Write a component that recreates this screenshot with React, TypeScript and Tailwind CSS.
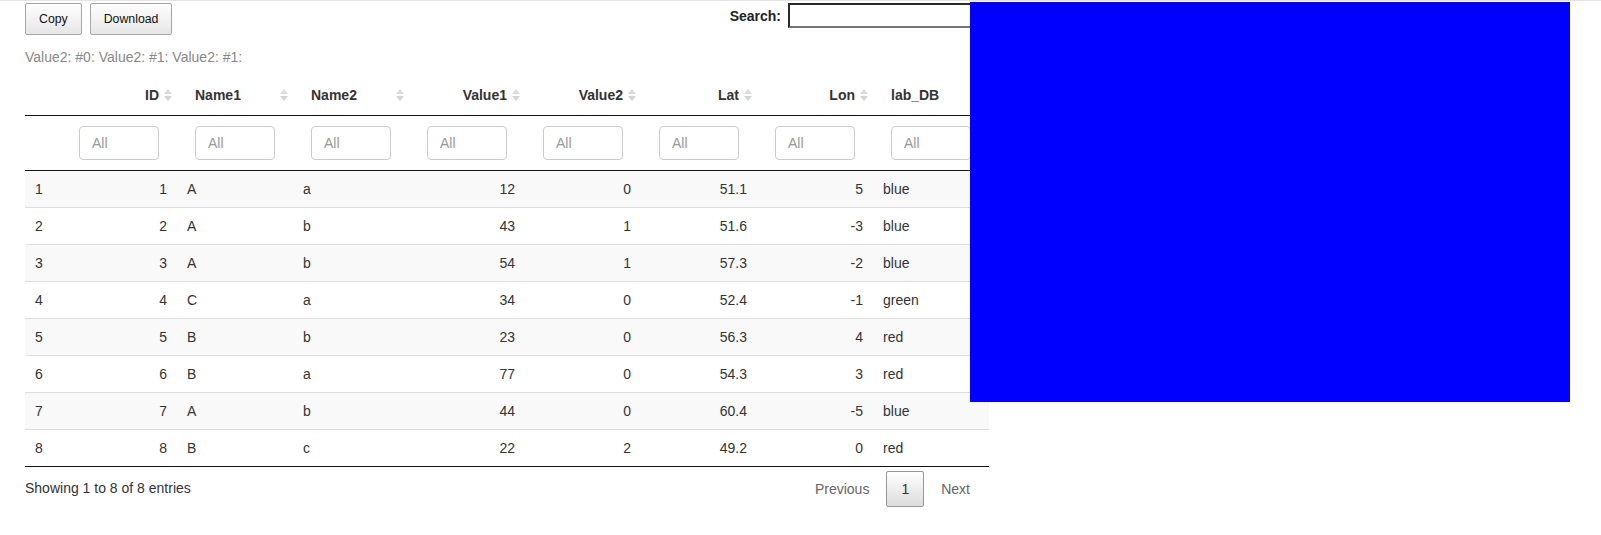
import React from "react";

type Row = [number, string, string, number, number, string, number, string];

const ROWS: Row[] = [
  [1, "A", "a", 12, 0, "51.1", 5, "blue"],
  [2, "A", "b", 43, 1, "51.6", -3, "blue"],
  [3, "A", "b", 54, 1, "57.3", -2, "blue"],
  [4, "C", "a", 34, 0, "52.4", -1, "green"],
  [5, "B", "b", 23, 0, "56.3", 4, "red"],
  [6, "B", "a", 77, 0, "54.3", 3, "red"],
  [7, "A", "b", 44, 0, "60.4", -5, "blue"],
  [8, "B", "c", 22, 2, "49.2", 0, "red"],
];

// label + whether the column is numeric (right aligned)
const COLS: { label: string; right: boolean }[] = [
  { label: "ID", right: true },
  { label: "Name1", right: false },
  { label: "Name2", right: false },
  { label: "Value1", right: true },
  { label: "Value2", right: true },
  { label: "Lat", right: true },
  { label: "Lon", right: true },
  { label: "lab_DB", right: false },
];

function SortIcon() {
  return (
    <span className="w-[18px] flex justify-center items-center shrink-0">
      <svg width="8" height="12" viewBox="0 0 8 12">
        <polygon points="0,5 4,0 8,5" fill="#dcdcdc" />
        <polygon points="0,7 8,7 4,12" fill="#d4d4d4" />
      </svg>
    </span>
  );
}

export default function App() {
  return (
    <div
      className="relative min-h-[535px] bg-white border-t border-[#e3e3e3] pt-[2px] text-[14px] leading-[20px] text-[#333]"
      style={{ fontFamily: '"Liberation Sans", Arial, sans-serif' }}
    >
      <div className="w-[964px] ml-[25px]">
        {/* top controls */}
        <div className="flex items-start justify-between h-[32px]">
          <div className="flex gap-[8px]">
            <button className="h-[32px] px-[13px] text-[12.3px] leading-[18px] text-[#111] border border-[#a6a6a6] rounded-[2px] bg-gradient-to-b from-white to-[#e6e6e6]">Copy</button>
            <button className="h-[32px] px-[13px] text-[12.3px] leading-[18px] text-[#111] border border-[#a6a6a6] rounded-[2px] bg-gradient-to-b from-white to-[#e6e6e6]">Download</button>
          </div>
          <div className="flex items-center">
            <span className="font-bold text-[#222]">Search:</span>
            <input className="ml-[7px] w-[201px] h-[25px] border-2 border-t-[#2a2a2a] border-l-[#2a2a2a] border-b-[#767676] border-r-[#767676] bg-white outline-none" />
          </div>
        </div>

        <div className="mt-[12px] text-[#888]">Value2: #0: Value2: #1: Value2: #1:</div>

        {/* table */}
        <table className="mt-[8px] w-[964px] table-fixed border-separate border-spacing-0">
          <colgroup>
            <col className="w-[36px]" />
            {COLS.map(c => <col key={c.label} className="w-[116px]" />)}
          </colgroup>
          <thead>
            <tr>
              <th className="h-[41px] px-[18px] border-b border-[#111]" />
              {COLS.map(c => (
                <th key={c.label} className="h-[41px] pl-[18px] pr-0 py-[10px] border-b border-[#111] font-bold text-[#333]">
                  <div className={`flex items-center ${c.right ? "justify-end" : "justify-between"}`}>
                    <span className="whitespace-nowrap">{c.label}</span>
                    <SortIcon />
                  </div>
                </th>
              ))}
            </tr>
            <tr>
              <td className="px-[18px] py-[10px] border-b border-[#111]" />
              {COLS.map(c => (
                <td key={c.label} className="px-[18px] py-[10px] border-b border-[#111]">
                  <input
                    placeholder="All"
                    className="block w-[80px] h-[34px] px-[12px] border border-[#ccc] rounded-[4px] bg-white text-[14px] placeholder:text-[#999] outline-none"
                  />
                </td>
              ))}
            </tr>
          </thead>
          <tbody>
            {ROWS.map((r, i) => {
              const bg = i % 2 === 0 ? "bg-[#f9f9f9]" : "bg-white";
              const bt = i === 0 ? "" : "border-t border-t-[#ddd]";
              const last = i === ROWS.length - 1 ? "border-b border-b-[#111]" : "";
              return (
                <tr key={i} className={bg}>
                  <td className={`px-[10px] py-[8px] ${bt} ${last}`}>{i + 1}</td>
                  {r.map((v, j) => (
                    <td key={j} className={`px-[10px] py-[8px] ${bt} ${last} ${COLS[j].right ? "text-right" : "text-left"}`}>{v}</td>
                  ))}
                </tr>
              );
            })}
          </tbody>
        </table>

        {/* footer */}
        <div className="flex justify-between items-start">
          <div className="pt-[11px]">Showing 1 to 8 of 8 entries</div>
          <div className="pt-[4px] mr-[4px] flex">
            <span className="px-[14px] py-[7px] border border-transparent text-[#666]">Previous</span>
            <span className="ml-[2px] px-[14px] py-[7px] border border-[#979797] rounded-[2px] bg-gradient-to-b from-white to-[#dcdcdc] text-[#333]">1</span>
            <span className="ml-[2px] px-[14px] py-[7px] border border-transparent text-[#666]">Next</span>
          </div>
        </div>
      </div>

      {/* plot output */}
      <div className="absolute left-[970px] top-[1px] w-[600px] h-[400px] bg-[#0000ff]" />
    </div>
  );
}
